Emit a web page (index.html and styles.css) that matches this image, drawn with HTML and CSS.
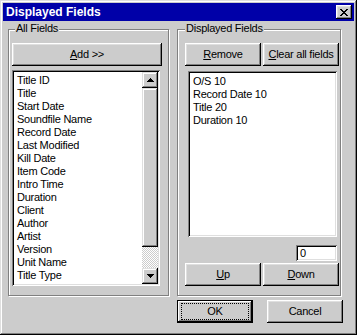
FILE: index.html
```html
<!DOCTYPE html>
<html lang="en">
<head>
<meta charset="UTF-8" />
<title>Displayed Fields</title>
<link rel="stylesheet" href="styles.css">
</head>
<body>
    <div class="window">
        <div class="titlebar">
            <span class="title">Displayed Fields</span>
            <div class="close-btn">
                <svg width="8" height="7" viewBox="0 0 8 7" shape-rendering="crispEdges">
                    <path d="M0 0h2v1h-2zM6 0h2v1h-2zM1 1h2v1h-2zM5 1h2v1h-2zM2 2h4v1h-4zM3 3h2v1h-2zM2 4h4v1h-4zM1 5h2v1h-2zM5 5h2v1h-2zM0 6h2v1h-2zM6 6h2v1h-2z" fill="#000"/>
                </svg>
            </div>
        </div>

        <div class="client">
            <div class="groups">
                <!-- All Fields -->
                <div class="group group-all">
                    <span class="group-label">All Fields</span>
                    <div class="btn btn-add"><span><u>A</u>dd &gt;&gt;</span></div>
                    <div class="listbox listbox-all">
                        <ul class="items">
                            <li>Title ID</li>
                            <li>Title</li>
                            <li>Start Date</li>
                            <li>Soundfile Name</li>
                            <li>Record Date</li>
                            <li>Last Modified</li>
                            <li>Kill Date</li>
                            <li>Item Code</li>
                            <li>Intro Time</li>
                            <li>Duration</li>
                            <li>Client</li>
                            <li>Author</li>
                            <li>Artist</li>
                            <li>Version</li>
                            <li>Unit Name</li>
                            <li>Title Type</li>
                            <li>O/S</li>
                        </ul>
                        <div class="scrollbar">
                            <div class="sb-btn">
                                <svg width="7" height="4" viewBox="0 0 7 4" shape-rendering="crispEdges"><path d="M3 0h1v1h-1zM2 1h3v1h-3zM1 2h5v1h-5zM0 3h7v1h-7z" fill="#000"/></svg>
                            </div>
                            <div class="sb-thumb"></div>
                            <div class="sb-track"></div>
                            <div class="sb-btn">
                                <svg width="7" height="4" viewBox="0 0 7 4" shape-rendering="crispEdges"><path d="M0 0h7v1h-7zM1 1h5v1h-5zM2 2h3v1h-3zM3 3h1v1h-1z" fill="#000"/></svg>
                            </div>
                        </div>
                    </div>
                </div>

                <!-- Displayed Fields -->
                <div class="group group-shown">
                    <span class="group-label">Displayed Fields</span>
                    <div class="btn-row">
                        <div class="btn"><span><u>R</u>emove</span></div>
                        <div class="btn"><span><u>C</u>lear all fields</span></div>
                    </div>
                    <div class="listbox listbox-shown">
                        <ul class="items">
                            <li>O/S 10</li>
                            <li>Record Date 10</li>
                            <li>Title 20</li>
                            <li>Duration 10</li>
                        </ul>
                    </div>
                    <div class="edit">0</div>
                    <div class="btn-row btn-row-move">
                        <div class="btn"><span><u>U</u>p</span></div>
                        <div class="btn"><span><u>D</u>own</span></div>
                    </div>
                </div>
            </div>

            <div class="footer">
                <div class="btn btn-default"><span class="focus-ring">OK</span></div>
                <div class="btn"><span>Cancel</span></div>
            </div>
        </div>
    </div>
</body>
</html>
```

FILE: styles.css
```css
html, body {
    margin: 0;
    padding: 0;
}

body {
    background: #ccc;
    font-family: "Liberation Sans", Arial, sans-serif;
    font-size: 11px;
    letter-spacing: -0.25px;
    color: #000;
}

.window {
    width: 357px;
    height: 335px;
    box-sizing: border-box;
    padding: 3px;
    background: #ccc;
    display: flex;
    flex-direction: column;
    box-shadow: inset -1px -1px #000, inset 1px 1px #dfdfdf,
                inset -2px -2px #808080, inset 2px 2px #fff;
}

/* title bar */
.titlebar {
    flex: none;
    height: 18px;
    background: #0000a8;
    display: flex;
    align-items: center;
    justify-content: space-between;
    padding: 0 2px 0 3px;
}

.title {
    color: #fff;
    font-weight: bold;
    font-size: 12px;
    letter-spacing: 0;
}

.close-btn {
    width: 16px;
    height: 14px;
    box-sizing: border-box;
    background: #ccc;
    display: flex;
    align-items: center;
    justify-content: center;
    box-shadow: inset -1px -1px #000, inset 1px 1px #fff,
                inset -2px -2px #808080, inset 2px 2px #dfdfdf;
}

/* dialog body */
.client {
    flex: 1;
    display: flex;
    flex-direction: column;
    padding: 8px 11px 0 5px;
}

.groups {
    display: flex;
    gap: 8px;
}

.group {
    box-sizing: border-box;
    border: 1px solid #808080;
    box-shadow: inset 1px 1px #fff, 1px 1px #fff;
    display: flex;
    flex-direction: column;
}

.group-label {
    align-self: flex-start;
    margin-top: -8px;
    padding: 0 1px;
    line-height: 13px;
    background: #ccc;
}

.group-all {
    width: 161px;
    padding: 0 6px 9px 3px;
}

.group-all .group-label {
    margin-left: 3px;
}

.group-shown {
    width: 164px;
    padding: 0 1px 9px 7px;
}

/* buttons */
.btn {
    box-sizing: border-box;
    width: 76px;
    height: 23px;
    background: #ccc;
    display: flex;
    align-items: center;
    justify-content: center;
    line-height: 13px;
    box-shadow: inset -1px -1px #000, inset 1px 1px #fff,
                inset -2px -2px #808080, inset 2px 2px #dfdfdf;
}

.btn u {
    text-underline-offset: 1px;
}

.btn-add {
    width: 150px;
    margin-top: 8px;
}

.btn-row {
    display: flex;
    gap: 2px;
    margin-top: 8px;
}

.btn-row-move {
    margin-top: 2px;
}

.btn-default {
    padding: 3px 4px;
    align-items: stretch;
    box-shadow: inset 0 0 0 1px #000, inset -2px -2px #000,
                inset 2px 2px #fff, inset -3px -3px #808080;
}

.focus-ring {
    flex: 1;
    border: 1px dotted #000;
    display: flex;
    align-items: center;
    justify-content: center;
}

/* list boxes */
.listbox {
    box-sizing: border-box;
    background: #fff;
    padding: 2px;
    display: flex;
    overflow: hidden;
    box-shadow: inset 1px 1px #808080, inset -1px -1px #fff,
                inset 2px 2px #000, inset -2px -2px #dfdfdf;
}

.listbox-all {
    width: 148px;
    height: 216px;
    margin-top: 4px;
}

.listbox-shown {
    width: 149px;
    height: 166px;
    margin: 5px 0 0 3px;
}

.items {
    flex: 1;
    list-style: none;
    margin: 0;
    padding: 2px 0 0 3px;
    line-height: 13px;
    overflow: hidden;
    white-space: nowrap;
}

.scrollbar {
    flex: none;
    width: 16px;
    display: flex;
    flex-direction: column;
}

.sb-btn,
.sb-thumb {
    box-sizing: border-box;
    background: #ccc;
    box-shadow: inset -1px -1px #000, inset 1px 1px #dfdfdf,
                inset -2px -2px #808080, inset 2px 2px #fff;
}

.sb-btn {
    height: 16px;
    display: flex;
    align-items: center;
    justify-content: center;
}

.sb-thumb {
    height: 159px;
}

.sb-track {
    flex: 1;
    background: repeating-conic-gradient(#ccc 0 25%, #fff 0 50%) 0 0 / 2px 2px;
}

/* count field */
.edit {
    align-self: flex-end;
    box-sizing: border-box;
    width: 41px;
    height: 16px;
    margin: 8px 2px 0 0;
    padding: 2px 0 0 4px;
    line-height: 12px;
    background: #fff;
    box-shadow: inset 1px 1px #808080, inset -1px -1px #fff,
                inset 2px 2px #000, inset -2px -2px #dfdfdf;
}

/* OK / Cancel */
.footer {
    display: flex;
    justify-content: flex-end;
    gap: 14px;
    margin-top: 4px;
}
```
